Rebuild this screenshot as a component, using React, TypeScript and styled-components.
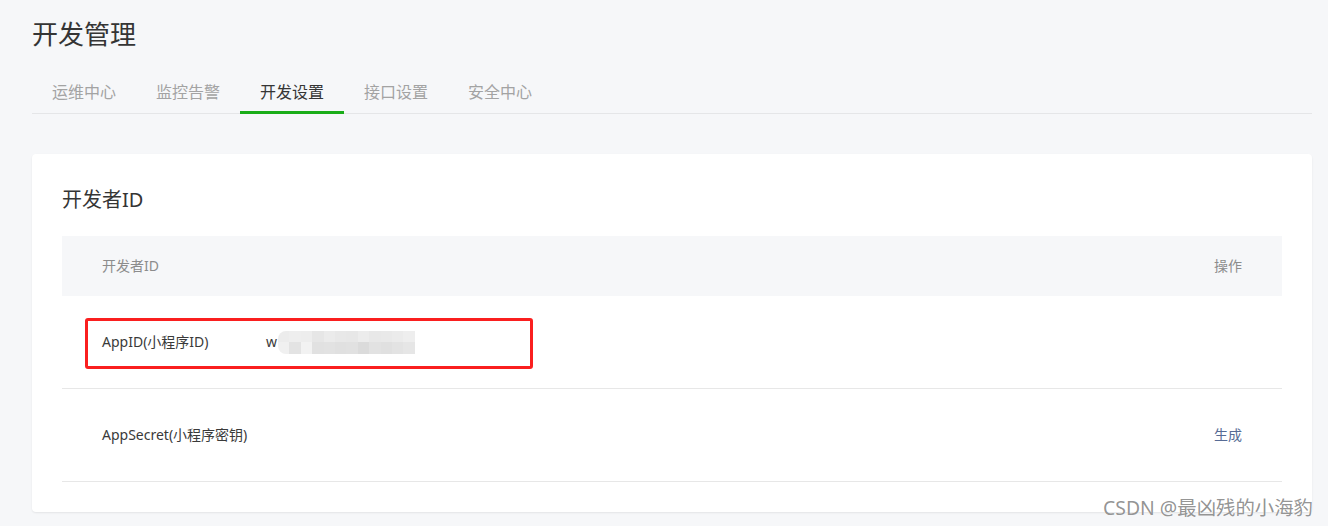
import styled, { createGlobalStyle } from "styled-components";

const GlobalStyle = createGlobalStyle`
  html, body {
    margin: 0;
    padding: 0;
    background: #f6f7f9;
  }
  body {
    font-family: "Noto Sans", "Noto Sans CJK SC", sans-serif;
    color: #353535;
  }
`;

const Page = styled.div`
  position: relative;
  height: 526px;
  padding: 16px 16px 0 32px;
  box-sizing: border-box;
  overflow: hidden;
`;

const Title = styled.h1`
  margin: 0;
  font-size: 26px;
  line-height: 36px;
  font-weight: 400;
  color: #353535;
`;

const Tabs = styled.div`
  display: flex;
  margin-top: 28px;
  box-shadow: inset 0 -1px 0 #e5e6e8;
`;

const Tab = styled.div<{ $active?: boolean }>`
  padding: 0 20px 7px;
  font-size: 16px;
  line-height: 24px;
  color: ${({ $active }) => ($active ? "#353535" : "#a3a3a3")};
  border-bottom: 3px solid ${({ $active }) => ($active ? "#1aad19" : "transparent")};
`;

const Card = styled.div`
  margin-top: 40px;
  background: #fff;
  border-radius: 4px;
  box-shadow: 0 1px 2px rgba(0, 0, 0, 0.08);
  padding: 30px 30px 30px;
`;

const CardTitle = styled.h2`
  margin: 0 0 20px;
  font-size: 20px;
  line-height: 32px;
  font-weight: 400;
  color: #353535;
`;

const TableHead = styled.div`
  display: flex;
  justify-content: space-between;
  align-items: center;
  height: 60px;
  padding: 0 40px;
  background: #f6f7f9;
  font-size: 14px;
  line-height: 20px;
  color: #8c8c8c;
`;

const Row = styled.div`
  position: relative;
  display: flex;
  align-items: center;
  height: 92px;
  padding: 0 40px;
  border-bottom: 1px solid #e7e7e7;
  font-size: 14px;
  line-height: 20px;
`;

const Label = styled.div`
  width: 164px;
  color: #3a3a3a;
`;

const Value = styled.div`
  flex: 1;
  display: flex;
  align-items: center;
  color: #3a3a3a;
`;

const Action = styled.a`
  color: #576b95;
  text-decoration: none;
`;

const Mosaic = styled.div`
  display: grid;
  grid-template-columns: repeat(12, 11.4px);
  grid-template-rows: 11.5px 11.5px;
  margin-left: 1px;
  border-radius: 8px 0 0 8px;
  overflow: hidden;
`;

const Highlight = styled.div`
  position: absolute;
  left: 23px;
  top: 22px;
  width: 448px;
  height: 51px;
  box-sizing: border-box;
  border: 3px solid #fa1f1f;
  border-radius: 3px;
  pointer-events: none;
`;

const Watermark = styled.div`
  position: absolute;
  right: 15px;
  bottom: 5px;
  font-size: 19.4px;
  line-height: 26px;
  color: rgba(120, 120, 120, 0.8);
  text-shadow: 0 0 1px #fff;
`;

const mosaicShades = [
  "#ececec", "#eeeeee", "#ededed", "#e6e6e6", "#ebebeb", "#e8e8e8", "#e7e7e7", "#ececec", "#e8e8e8", "#e9e9e9", "#ebebeb", "#eeeeee",
  "#f0f0f0", "#e3e3e3", "#f2f2f2", "#e1e1e1", "#e2e2e2", "#e0e0e0", "#e1e1e1", "#dbdbdb", "#e2e2e2", "#e0e0e0", "#e3e3e3", "#e6e6e6",
];

const tabs = ["运维中心", "监控告警", "开发设置", "接口设置", "安全中心"];

export default function App() {
  return (
    <>
      <GlobalStyle />
      <Page>
        <Title>开发管理</Title>
        <Tabs>
          {tabs.map((t) => (
            <Tab key={t} $active={t === "开发设置"}>{t}</Tab>
          ))}
        </Tabs>
        <Card>
          <CardTitle>开发者ID</CardTitle>
          <TableHead>
            <span>开发者ID</span>
            <span>操作</span>
          </TableHead>
          <Row>
            <Label>AppID(小程序ID)</Label>
            <Value>
              w
              <Mosaic>
                {mosaicShades.map((c, i) => (
                  <div key={i} style={{ background: c }} />
                ))}
              </Mosaic>
            </Value>
            <Highlight />
          </Row>
          <Row>
            <Label>AppSecret(小程序密钥)</Label>
            <Value />
            <Action href="#">生成</Action>
          </Row>
        </Card>
        <Watermark>CSDN @最凶残的小海豹</Watermark>
      </Page>
    </>
  );
}
